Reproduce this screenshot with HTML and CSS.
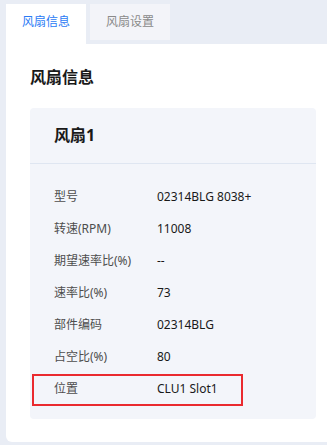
FILE: index.html
```html
<!DOCTYPE html>
<html lang="zh-CN">
  <head>
    <meta charset="UTF-8" />
    <meta name="viewport" content="width=device-width, initial-scale=1.0" />
    <title>风扇信息</title>
    <link rel="stylesheet" href="styles.css">
  </head>
  <body>
    <div class="tabs">
      <div class="tab active">风扇信息</div>
      <div class="tab">风扇设置</div>
    </div>
    <div class="panel">
      <h2 class="title">风扇信息</h2>
      <div class="card">
        <div class="card-head">风扇1</div>
        <div class="card-body">
          <div class="row"><span class="label">型号</span><span class="value">02314BLG 8038+</span></div>
          <div class="row"><span class="label">转速(RPM)</span><span class="value">11008</span></div>
          <div class="row"><span class="label">期望速率比(%)</span><span class="value">--</span></div>
          <div class="row"><span class="label">速率比(%)</span><span class="value">73</span></div>
          <div class="row"><span class="label">部件编码</span><span class="value">02314BLG</span></div>
          <div class="row"><span class="label">占空比(%)</span><span class="value">80</span></div>
          <div class="row marked"><span class="label">位置</span><span class="value">CLU1 Slot1</span><span class="mark"></span></div>
        </div>
      </div>
    </div>
  </body>
</html>
```

FILE: styles.css
```css
body {
  margin: 0;
  background: #e9edf5;
  font-family: "Noto Sans", "Noto Sans CJK SC", sans-serif;
  font-size: 12px;
  color: #191919;
}
.tabs {
  display: flex;
  align-items: flex-start;
  gap: 4px;
  padding: 4px 0 0 6px;
}
.tab {
  width: 80px;
  height: 36px;
  line-height: 36px;
  text-align: center;
  background: #f3f4f9;
  color: #8a8a8a;
}
.tab.active {
  height: 40px;
  background: #fff;
  color: #2b7bf5;
}
.panel {
  margin-left: 6px;
  background: #fff;
  border-radius: 0 0 0 6px;
  padding: 22px 11px 23px 24px;
}
.title {
  margin: 0 0 20px;
  font-size: 16px;
  line-height: 22px;
  font-weight: bold;
}
.card {
  background: #f3f5fa;
  border-radius: 4px;
}
.card-head {
  height: 55px;
  line-height: 55px;
  padding-left: 24px;
  font-size: 16px;
  font-weight: bold;
  border-bottom: 1px solid #dfe6f1;
}
.card-body {
  padding: 17px 0 14px 24px;
}
.row {
  display: flex;
  height: 32px;
  line-height: 32px;
  position: relative;
}
.label {
  width: 103px;
  color: #4d4d4d;
}
.mark {
  position: absolute;
  left: -22px;
  top: 1px;
  width: 207px;
  height: 28px;
  border: 2px solid #ea2a2f;
}
```
